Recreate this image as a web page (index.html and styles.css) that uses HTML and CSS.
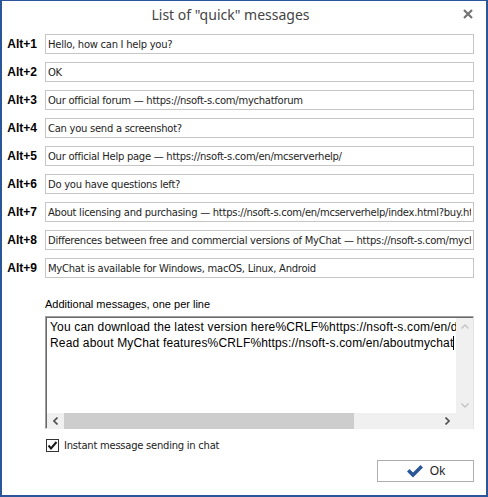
FILE: index.html
```html
<!DOCTYPE html>
<html lang="en">
<head>
    <meta charset="UTF-8">
    <title>List of "quick" messages</title>
    <link rel="stylesheet" href="styles.css">
</head>
<body>
    <div class="window">
        <div class="titlebar">
            <h1 class="title">List of "quick" messages</h1>
            <button class="close" title="Close">
                <svg width="10" height="10" viewBox="0 0 10 10"><path d="M1 1 L9 9 M9 1 L1 9" stroke="#737373" stroke-width="2.2"/></svg>
            </button>
        </div>

        <div class="quick-list">
            <label class="hotkey">Alt+1</label><input class="msg" type="text" value="Hello, how can I help you?">
            <label class="hotkey">Alt+2</label><input class="msg" type="text" value="OK">
            <label class="hotkey">Alt+3</label><input class="msg" type="text" value="Our official forum — https://nsoft-s.com/mychatforum">
            <label class="hotkey">Alt+4</label><input class="msg" type="text" value="Can you send a screenshot?">
            <label class="hotkey">Alt+5</label><input class="msg" type="text" value="Our official Help page — https://nsoft-s.com/en/mcserverhelp/">
            <label class="hotkey">Alt+6</label><input class="msg" type="text" value="Do you have questions left?">
            <label class="hotkey">Alt+7</label><input class="msg" type="text" value="About licensing and purchasing — https://nsoft-s.com/en/mcserverhelp/index.html?buy.html">
            <label class="hotkey">Alt+8</label><input class="msg" type="text" value="Differences between free and commercial versions of MyChat — https://nsoft-s.com/mychat-free-vs-commercial">
            <label class="hotkey">Alt+9</label><input class="msg" type="text" value="MyChat is available for Windows, macOS, Linux, Android">
        </div>

        <div class="extra">
            <div class="extra-label">Additional messages, one per line</div>
            <div class="memo">
                <div class="memo-text">
                    <div class="memo-line">You can download the latest version here%CRLF%https://nsoft-s.com/en/download/</div>
                    <div class="memo-line">Read about MyChat features%CRLF%https://nsoft-s.com/en/aboutmychat<span class="caret"></span></div>
                </div>
                <div class="vscroll">
                    <span class="arrow">
                        <svg width="8" height="5" viewBox="0 0 8 5"><path d="M0.5 4.5 L4 1 L7.5 4.5" fill="none" stroke="#c2c2c2" stroke-width="1.3"/></svg>
                    </span>
                    <span class="arrow">
                        <svg width="8" height="5" viewBox="0 0 8 5"><path d="M0.5 0.5 L4 4 L7.5 0.5" fill="none" stroke="#c2c2c2" stroke-width="1.3"/></svg>
                    </span>
                </div>
                <div class="hscroll">
                    <span class="arrow">
                        <svg width="5" height="8" viewBox="0 0 5 8"><path d="M4.5 0.5 L1 4 L4.5 7.5" fill="none" stroke="#505050" stroke-width="1.6"/></svg>
                    </span>
                    <span class="thumb"></span>
                    <span class="track"></span>
                    <span class="arrow">
                        <svg width="5" height="8" viewBox="0 0 5 8"><path d="M0.5 0.5 L4 4 L0.5 7.5" fill="none" stroke="#505050" stroke-width="1.6"/></svg>
                    </span>
                </div>
                <div class="corner"></div>
            </div>
        </div>

        <label class="option">
            <span class="checkbox">
                <svg width="11" height="11" viewBox="0 0 11 11"><path d="M1.5 5.5 L4 8.5 L9.5 2" fill="none" stroke="#1a1a1a" stroke-width="2"/></svg>
            </span>
            Instant message sending in chat
        </label>

        <div class="footer">
            <button class="ok-btn">
                <svg width="18" height="14" viewBox="0 0 18 14"><path d="M1 7.5 L3.5 5 L7 8.5 L14.5 1 L17 3.5 L7 13.5 Z" fill="#2b5797"/></svg>
                Ok
            </button>
        </div>
    </div>
</body>
</html>
```

FILE: styles.css
```css
* {
    margin: 0;
    padding: 0;
    box-sizing: border-box;
}

body {
    background: #ffffff;
    font-family: 'Liberation Sans', Arial, sans-serif;
}

/* Dialog window */
.window {
    width: 488px;
    height: 497px;
    background: #ffffff;
    border: 2px solid #2b579a;
    border-top-width: 1px;
    display: flex;
    flex-direction: column;
}

.titlebar {
    display: flex;
    align-items: center;
    height: 26px;
}

.title {
    flex: 1;
    text-align: center;
    font-family: 'Noto Sans', sans-serif;
    font-weight: normal;
    font-size: 14px;
    color: #444444;
}

.close {
    width: 18px;
    height: 12px;
    margin-right: 9px;
    border: none;
    background: none;
    display: flex;
    align-items: center;
    justify-content: center;
}

/* Alt+N rows */
.quick-list {
    display: grid;
    grid-template-columns: 35px 1fr;
    column-gap: 8px;
    row-gap: 8px;
    padding: 7px 12px 0 0;
    align-items: center;
}

.hotkey {
    text-align: right;
    font-weight: bold;
    font-size: 12px;
    color: #000000;
}

.msg {
    height: 20px;
    border: 1px solid #c6c6c6;
    padding: 0 2px;
    font-family: 'DejaVu Sans', Verdana, sans-serif;
    font-size: 10px;
    letter-spacing: -0.27px;
    color: #1e1e1e;
    outline: none;
    background: #ffffff;
}

/* Additional messages */
.extra {
    padding: 20px 12px 0 43px;
}

.extra-label {
    font-size: 11px;
    color: #000000;
    height: 18px;
}

.memo {
    display: grid;
    grid-template-columns: 1fr 17px;
    grid-template-rows: 95px 16px;
    height: 113px;
    border: 1px solid #e3e3e3;
    border-top-color: #a0a0a0;
    border-left-color: #a0a0a0;
    box-shadow: inset 1px 1px 0 #696969;
    padding: 1px 0 0 1px;
}

.memo-text {
    overflow: hidden;
    padding: 1px 0 0 3px;
    font-size: 12px;
    letter-spacing: 0.16px;
    line-height: 16px;
    color: #000000;
    white-space: nowrap;
}

.caret {
    display: inline-block;
    width: 1px;
    height: 14px;
    background: #000000;
    vertical-align: -3px;
}

.vscroll {
    background: #f0f0f0;
    display: flex;
    flex-direction: column;
    justify-content: space-between;
}

.arrow {
    width: 17px;
    height: 16px;
    display: flex;
    align-items: center;
    justify-content: center;
}

.hscroll {
    background: #f0f0f0;
    display: flex;
    align-items: center;
}

.thumb {
    width: 290px;
    height: 16px;
    background: #cdcdcd;
}

.track {
    flex: 1;
}

.corner {
    background: #f0f0f0;
}

/* Checkbox */
.option {
    display: flex;
    align-items: center;
    gap: 5px;
    margin: 10px 0 0 44px;
    font-family: 'DejaVu Sans', Verdana, sans-serif;
    font-size: 10px;
    letter-spacing: -0.25px;
    color: #222222;
}

.checkbox {
    width: 13px;
    height: 13px;
    border: 1px solid #333333;
    display: flex;
    align-items: center;
    justify-content: center;
}

/* Footer */
.footer {
    display: flex;
    justify-content: flex-end;
    padding: 8px 12px 0 0;
}

.ok-btn {
    width: 97px;
    height: 22px;
    border: 1px solid #adadad;
    background: #ffffff;
    display: flex;
    align-items: center;
    justify-content: center;
    gap: 6px;
    font-family: 'Liberation Sans', Arial, sans-serif;
    font-size: 12px;
    color: #1e1e1e;
}
```
